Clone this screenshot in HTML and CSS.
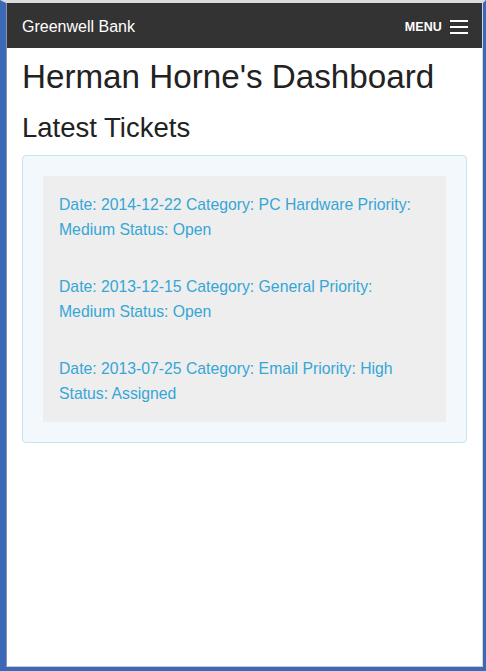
FILE: index.html
```html
<!DOCTYPE html>
<html lang="en">
<head>
<meta charset="utf-8">
<title>Herman Horne's Dashboard</title>
<link rel="stylesheet" href="styles.css">
</head>
<body>
<div class="window">
  <div class="viewport">
    <nav class="navbar">
      <a class="brand" href="#">Greenwell Bank</a>
      <button class="menu-toggle" type="button">
        <span class="menu-label">MENU</span>
        <span class="burger"><i></i><i></i><i></i></span>
      </button>
    </nav>
    <main class="container">
      <h1 class="page-title">Herman Horne's Dashboard</h1>
      <h2 class="section-title">Latest Tickets</h2>
      <section class="panel">
        <div class="well">
          <p class="ticket">Date: 2014-12-22 Category: PC Hardware Priority: Medium Status: Open</p>
          <p class="ticket">Date: 2013-12-15 Category: General Priority: Medium Status: Open</p>
          <p class="ticket">Date: 2013-07-25 Category: Email Priority: High Status: Assigned</p>
        </div>
      </section>
    </main>
  </div>
</div>
</body>
</html>
```

FILE: styles.css
```css
* { box-sizing: border-box; }
html, body { margin: 0; padding: 0; }
body {
  font-family: "Liberation Sans", Arial, sans-serif;
  background: #ffffff;
}
.window {
  height: 671px;
  border-top: 3px solid #dcdcdc;
  border-left: 6px solid #3c68b8;
  border-right: 3px solid #3c68b8;
  border-bottom: 4px solid #3c68b8;
  background: #ffffff;
}
.viewport {
  height: 100%;
  border-left: 1px solid #8a96ad;
  border-right: 1px solid #d0d4dc;
  border-bottom: 1px solid #c8ccd4;
  background: #ffffff;
}
.navbar {
  height: 45px;
  background: #333333;
  display: flex;
  align-items: center;
  justify-content: space-between;
  padding: 2px 14px 0 15px;
}
.brand {
  color: #ffffff;
  text-decoration: none;
  font-size: 16px;
  line-height: 20px;
}
.menu-toggle {
  display: flex;
  align-items: center;
  gap: 8px;
  background: none;
  border: 0;
  padding: 0;
  color: #ffffff;
  font-family: inherit;
}
.menu-label {
  font-size: 12.5px;
  font-weight: bold;
  line-height: 16px;
  letter-spacing: 0.1px;
}
.burger {
  display: flex;
  flex-direction: column;
  gap: 4px;
  width: 18px;
}
.burger i {
  display: block;
  height: 2px;
  background: #ffffff;
}
.container {
  padding: 0 15px;
}
.page-title {
  margin: 9px 0 0;
  font-size: 33.2px;
  line-height: 40px;
  font-weight: normal;
  color: #222222;
}
.section-title {
  margin: 15px 0 0;
  font-size: 27.5px;
  line-height: 32px;
  font-weight: normal;
  color: #222222;
}
.panel {
  margin-top: 11px;
  border: 1px solid #c6e5f0;
  border-radius: 4px;
  background: #f2f8fb;
  padding: 20px;
}
.well {
  background: #eeeeee;
  padding: 16px;
}
.ticket {
  margin: 32px 0 0;
  font-size: 15.75px;
  line-height: 25px;
  color: #35a6d6;
}
.ticket:first-child { margin-top: 0; }
```
